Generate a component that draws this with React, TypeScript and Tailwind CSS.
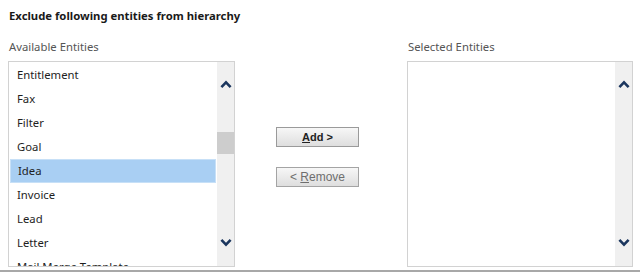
import React from "react";

const items = [
  "Entitlement",
  "Fax",
  "Filter",
  "Goal",
  "Idea",
  "Invoice",
  "Lead",
  "Letter",
  "Mail Merge Template",
];

function Chevron({ up }: { up?: boolean }) {
  return (
    <svg width="12" height="9" viewBox="0 0 12 9" className="block">
      <path
        d={up ? "M1.4 7.2 L6 2.4 L10.6 7.2" : "M1.4 1.8 L6 6.6 L10.6 1.8"}
        fill="none"
        stroke="#1b365e"
        strokeWidth="2.6"
        strokeLinejoin="miter"
      />
    </svg>
  );
}

function Scrollbar({ thumb }: { thumb?: boolean }) {
  return (
    <div className="flex w-[17px] shrink-0 flex-col items-center bg-[#f0f0f0]">
      <div className="h-[18px] shrink-0" />
      <Chevron up />
      {thumb ? (
        <>
          <div className="h-[43px] shrink-0" />
          <div className="h-[22px] w-full shrink-0 bg-[#cdcdcd]" />
          <div className="h-[84px] shrink-0" />
        </>
      ) : (
        <div className="h-[149px] shrink-0" />
      )}
      <Chevron />
    </div>
  );
}

export default function App() {
  const font = { fontFamily: '"Noto Sans", "Open Sans", Arial, sans-serif' };
  return (
    <div
      className="flex h-[272px] w-[640px] flex-col overflow-hidden bg-white"
      style={font}
    >
      <div className="h-[28px] shrink-0 pl-[9px] pt-[8px] text-[11.3px] font-bold leading-[16px] text-[#1a1a1a]">
        Exclude following entities from hierarchy
      </div>
      <div className="flex h-[242px] shrink-0 pl-[8px]">
        <div className="flex w-[227px] shrink-0 flex-col">
          <div className="h-[33px] shrink-0 pl-[1px] pt-[11px] text-[11.3px] leading-[16px] text-[#555555]">
            Available Entities
          </div>
          <div className="flex h-[206px] shrink-0 border border-[#d2d2d2]">
            <div className="flex min-w-0 flex-1 flex-col overflow-hidden pl-[1px] pr-[1px] pt-[1px]">
              {items.map((it) => (
                <div
                  key={it}
                  className={
                    "flex h-[24px] shrink-0 items-center whitespace-nowrap pl-[7px] text-[11.3px] text-[#1e1e1e] " +
                    (it === "Idea"
                      ? "border border-[#c7e0f7] bg-[#a9cff3] pl-[6px]"
                      : "")
                  }
                >
                  {it}
                </div>
              ))}
            </div>
            <Scrollbar thumb />
          </div>
        </div>
        <div className="ml-[41px] flex w-[83px] shrink-0 flex-col pt-[99px]">
          <button
            className="flex h-[20px] items-center justify-center border border-[#9a9a9a] bg-gradient-to-b from-[#f7f7f7] to-[#dedede] text-[11px] font-bold text-[#222222]"
            style={{ fontFamily: '"Liberation Sans", Arial, sans-serif' }}
          >
            <span>
              <span className="underline">A</span>dd &gt;
            </span>
          </button>
          <button
            className="mt-[20px] flex h-[20px] items-center justify-center border border-[#a4a4a4] bg-gradient-to-b from-[#f7f7f7] to-[#dedede] text-[12px] text-[#6e6e6e]"
            style={{ fontFamily: '"Liberation Sans", Arial, sans-serif' }}
          >
            <span>
              &lt; <span className="underline">R</span>emove
            </span>
          </button>
        </div>
        <div className="ml-[48px] flex w-[226px] shrink-0 flex-col">
          <div className="h-[33px] shrink-0 pl-[1px] pt-[11px] text-[11.3px] leading-[16px] text-[#555555]">
            Selected Entities
          </div>
          <div className="flex h-[206px] shrink-0 border border-[#d2d2d2]">
            <div className="flex-1" />
            <Scrollbar />
          </div>
        </div>
      </div>
      <div className="h-[2px] shrink-0 bg-[#a8a8a8]" />
    </div>
  );
}
